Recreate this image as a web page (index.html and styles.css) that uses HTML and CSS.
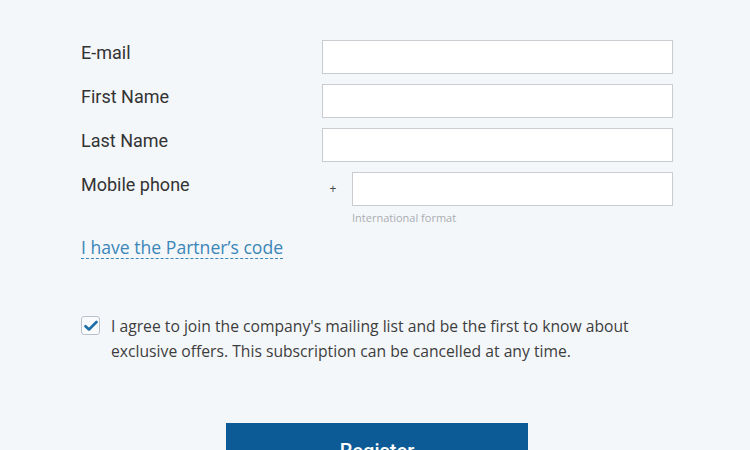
FILE: index.html
```html
<!DOCTYPE html>
<html>
<head>
<meta charset="utf-8">
<link rel="stylesheet" href="styles.css">
</head>
<body>
<div class="page">
  <form class="form">
    <div class="row">
      <label class="label">E-mail</label>
      <div class="field"><input class="input" type="text"></div>
    </div>
    <div class="row">
      <label class="label">First Name</label>
      <div class="field"><input class="input" type="text"></div>
    </div>
    <div class="row">
      <label class="label">Last Name</label>
      <div class="field"><input class="input" type="text"></div>
    </div>
    <div class="row">
      <label class="label">Mobile phone</label>
      <div class="field">
        <div class="phone">
          <span class="plus">+</span>
          <div class="phone-col">
            <input class="input" type="text">
            <span class="hint">International format</span>
          </div>
        </div>
      </div>
    </div>
    <div class="partner"><a class="partner-link">I have the Partner’s code</a></div>
    <div class="agree">
      <span class="check">
        <svg width="14" height="12" viewBox="0 0 14 12"><path d="M1.5 6.2 L5 9.5 L12.5 2" fill="none" stroke="#1f6ea8" stroke-width="2.6" stroke-linecap="round" stroke-linejoin="round"/></svg>
      </span>
      <p class="agree-text">I agree to join the company's mailing list and be the first to know about exclusive offers. This subscription can be cancelled at any time.</p>
    </div>
    <div class="actions">
      <button class="btn" type="button">Register</button>
    </div>
  </form>
</div>
</body>
</html>
```

FILE: styles.css
```css
html, body {
  margin: 0;
  padding: 0;
  background: #f4f7fa;
}
.page {
  padding: 40px 0 0 81px;
  width: 592px;
  font-family: "Open Sans", sans-serif;
  color: #333;
}
.form {
  display: flex;
  flex-direction: column;
}
.row {
  display: grid;
  grid-template-columns: 241px 351px;
  margin-bottom: 10px;
}
.label {
  font-family: Roboto, "Liberation Sans", sans-serif;
  font-size: 18px;
  line-height: 24px;
  color: #333;
  padding-top: 1px;
}
.input {
  box-sizing: border-box;
  display: block;
  width: 100%;
  height: 34px;
  border: 1px solid #c8cbcf;
  background: #fff;
  margin: 0;
  padding: 0 8px;
  outline: none;
}
.phone {
  display: flex;
}
.plus {
  width: 30px;
  text-align: center;
  padding-right: 8px;
  box-sizing: border-box;
  font-size: 12px;
  line-height: 34px;
  color: #444;
}
.phone-col {
  flex: 1;
  display: flex;
  flex-direction: column;
}
.hint {
  font-size: 11px;
  line-height: 14px;
  color: #a9adb2;
  margin-top: 5px;
}
.partner {
  margin-top: 2px;
}
.partner-link {
  font-size: 17.6px;
  line-height: 21px;
  color: #3b86b8;
  border-bottom: 1px dashed #3b86b8;
  display: inline-block;
}
.agree {
  display: flex;
  align-items: flex-start;
  margin-top: 56px;
}
.check {
  box-sizing: border-box;
  width: 19px;
  height: 19px;
  border: 1px solid #b9c2cc;
  border-radius: 3px;
  background: #f9fbfd;
  display: flex;
  align-items: center;
  justify-content: center;
  margin-top: 1px;
  flex: none;
}
.agree-text {
  margin: -1px 0 0 11px;
  font-size: 15.7px;
  line-height: 25px;
  color: #3d3d3d;
}
.actions {
  display: flex;
  padding-left: 145px;
  margin-top: 59px;
}
.btn {
  width: 302px;
  height: 56px;
  background: #0c5b97;
  border: none;
  color: #fff;
  font-family: Roboto, "Liberation Sans", sans-serif;
  font-size: 20px;
  font-weight: 500;
  padding: 0;
}
```
